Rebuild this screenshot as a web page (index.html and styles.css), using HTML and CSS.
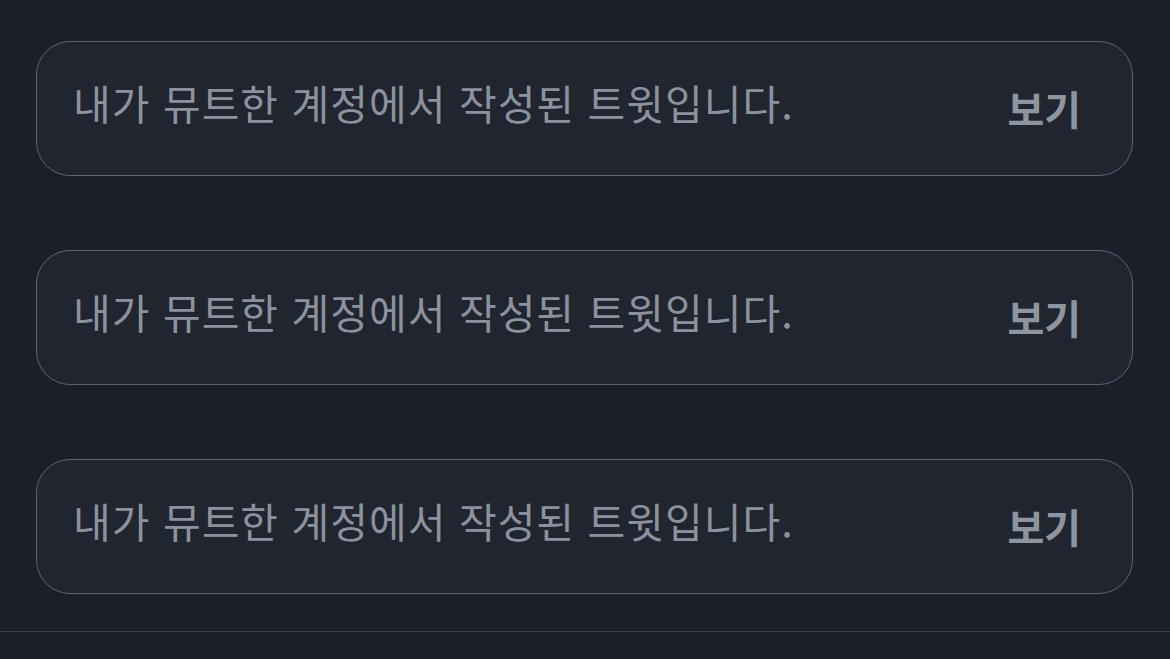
FILE: index.html
```html
<!DOCTYPE html>
<html lang="ko">
<head>
<meta charset="utf-8">
<link rel="stylesheet" href="styles.css">
</head>
<body>
<div class="feed">
  <div class="card"><span class="msg">내가 뮤트한 계정에서 작성된 트윗입니다.</span><span class="view">보기</span></div>
  <div class="card"><span class="msg">내가 뮤트한 계정에서 작성된 트윗입니다.</span><span class="view">보기</span></div>
  <div class="card"><span class="msg">내가 뮤트한 계정에서 작성된 트윗입니다.</span><span class="view">보기</span></div>
</div>
<div class="divider"></div>
</body>
</html>
```
FILE: styles.css
```css
html, body {
  margin: 0;
  padding: 0;
  background: #1a1f2a;
  height: 100%;
  overflow: hidden;
}
body {
  font-family: "Noto Sans CJK KR", "Noto Sans", sans-serif;
}
.feed {
  display: flex;
  flex-direction: column;
  gap: 74px;
  padding: 41px 37px 37px 36px;
}
.card {
  box-sizing: border-box;
  height: 135px;
  border: 1px solid #5d6470;
  border-radius: 34px;
  background: #20252f;
  display: flex;
  align-items: center;
  justify-content: space-between;
  padding: 0 51px 0 36px;
}
.msg {
  color: #8c929d;
  font-size: 41px;
  letter-spacing: 1px;
  padding-bottom: 14px;
}
.view {
  color: #8f959f;
  font-size: 40px;
  font-weight: 700;
  padding-bottom: 2px;
}
.divider {
  height: 1px;
  background: #3a3f49;
}
```
